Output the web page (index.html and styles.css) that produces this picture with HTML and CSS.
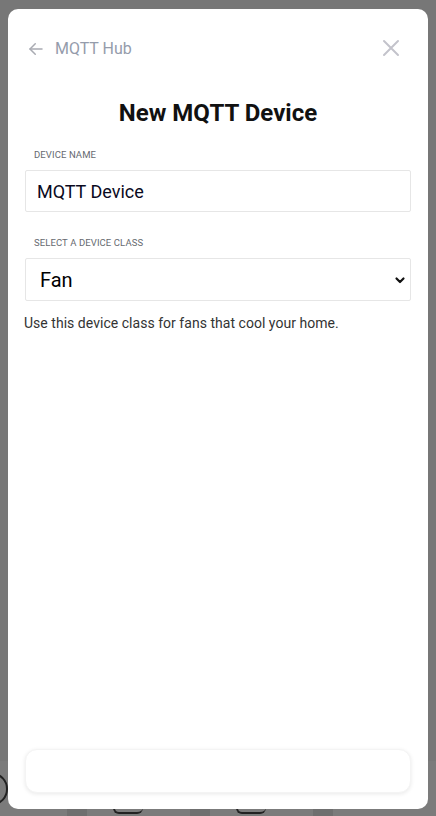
FILE: index.html
```html
<!DOCTYPE html>
<html lang="en">
<head>
<meta charset="utf-8">
<title>New MQTT Device</title>
<link rel="stylesheet" href="styles.css">
</head>
<body>
<div class="backdrop">
  <div class="bg-spacer"></div>
  <div class="bg-tiles">
    <div class="bg-tile bg-tile-first"><span class="bg-ring"></span></div>
    <div class="bg-tile"><span class="bg-curve"></span></div>
    <div class="bg-tile"><span class="bg-curve"></span></div>
    <div class="bg-tile"></div>
  </div>
</div>

<div class="modal">
  <header class="modal-header">
    <a class="back" href="#">
      <svg class="back-icon" width="18" height="18" viewBox="0 0 24 24" fill="none" stroke="currentColor" stroke-width="2" stroke-linecap="round" stroke-linejoin="round"><path d="M20 12H4"/><path d="M11 5l-7 7 7 7"/></svg>
      <span>MQTT Hub</span>
    </a>
    <button class="close" aria-label="Close">
      <svg width="18" height="18" viewBox="0 0 18 18" fill="none" stroke="currentColor" stroke-width="2" stroke-linecap="round"><path d="M2 2l14 14M16 2L2 16"/></svg>
    </button>
  </header>

  <h1 class="title">New MQTT Device</h1>

  <div class="field">
    <label class="label" for="name">Device name</label>
    <input id="name" class="input" type="text" value="MQTT Device">
  </div>

  <div class="field field-select">
    <label class="label" for="cls">Select a device class</label>
    <div class="select-wrap">
      <select id="cls" class="select">
        <option>Fan</option>
      </select>
      <svg class="chevron" width="12" height="12" viewBox="0 0 12 12" fill="none" stroke="currentColor" stroke-width="2.2" stroke-linecap="round" stroke-linejoin="round"><path d="M2.5 4.5L6 8l3.5-3.5"/></svg>
    </div>
  </div>

  <p class="help">Use this device class for fans that cool your home.</p>

  <div class="grow"></div>

  <div class="footer-card"></div>
</div>
</body>
</html>
```

FILE: styles.css
```css
* { box-sizing: border-box; }

html, body {
  margin: 0;
  padding: 0;
  height: 100%;
}

body {
  background: #777777;
  font-family: Roboto, "Liberation Sans", Arial, sans-serif;
  overflow: hidden;
}

.backdrop {
  height: 816px;
  display: flex;
  flex-direction: column;
}

.bg-spacer {
  flex: 1;
}

.bg-tiles {
  height: 55px;
  display: flex;
  gap: 20px;
  background: #6f6f6f;
}

.bg-tile {
  width: 120px;
  background: #7b7b7b;
  position: relative;
}

.bg-tile-first {
  width: 78px;
}

.bg-ring {
  position: absolute;
  left: -22px;
  top: 12px;
  width: 30px;
  height: 32px;
  border: 2px solid #222;
  border-radius: 50%;
}

.bg-curve {
  position: absolute;
  left: 26px;
  bottom: 2px;
  width: 30px;
  height: 6px;
  border-bottom: 2px solid #222;
  border-left: 2px solid #222;
  border-radius: 0 0 10px 10px;
}

.modal {
  position: fixed;
  left: 8px;
  top: 9px;
  width: 420px;
  height: 800px;
  background: #ffffff;
  border-radius: 10px;
  padding: 0 17px 16px;
  display: flex;
  flex-direction: column;
}

.modal-header {
  height: 78px;
  display: flex;
  align-items: center;
  justify-content: space-between;
  padding: 0 8px 0 2px;
}

.back {
  display: flex;
  align-items: center;
  gap: 10px;
  color: #959cab;
  text-decoration: none;
  font-size: 16px;
  margin-top: 1px;
}

.back-icon {
  color: #a9abb2;
}

.close {
  border: 0;
  background: none;
  padding: 0;
  width: 18px;
  height: 18px;
  color: #c3c3cb;
  display: flex;
  margin-right: 3px;
}

.title {
  margin: 12px 0 0;
  text-align: center;
  font-size: 24px;
  font-weight: 700;
  color: #111111;
  line-height: 28px;
}

.field {
  display: flex;
  flex-direction: column;
  margin-top: 22px;
}

.field-select {
  margin-top: 25px;
}

.label {
  font-size: 9.5px;
  text-transform: uppercase;
  color: #666a70;
  padding-left: 9px;
  line-height: 12px;
  letter-spacing: 0.1px;
}

.input {
  margin-top: 9px;
  height: 42px;
  border: 1px solid #e6e6e6;
  border-radius: 2px;
  padding: 0 11px;
  font-family: inherit;
  font-size: 18px;
  font-weight: 400;
  color: #0a0a1e;
  outline: none;
}

.select-wrap {
  position: relative;
  margin-top: 9px;
}

.select {
  width: 100%;
  height: 43px;
  appearance: none;
  -webkit-appearance: none;
  border: 1px solid #e6e6e6;
  border-radius: 2px;
  background: #ffffff;
  padding: 0 14px;
  font-family: inherit;
  font-size: 20px;
  color: #000000;
  outline: none;
}

.chevron {
  position: absolute;
  right: 5px;
  top: 16px;
  color: #111111;
  pointer-events: none;
}

.help {
  margin: 13px 0 0 -1px;
  font-size: 14px;
  color: #333333;
  line-height: 18px;
  letter-spacing: 0.03px;
}

.grow {
  flex: 1;
}

.footer-card {
  height: 44px;
  border-radius: 12px;
  background: #ffffff;
  box-shadow: 0 1px 4px rgba(0, 0, 0, 0.09);
  border: 1px solid #f4f4f4;
}
```
